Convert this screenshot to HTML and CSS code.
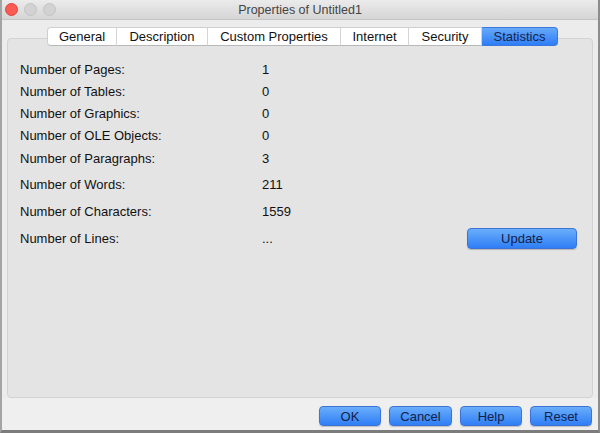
FILE: index.html
```html
<!DOCTYPE html>
<html lang="en">
<head>
    <meta charset="UTF-8">
    <meta name="viewport" content="width=device-width, initial-scale=1.0">
    <title>Properties of Untitled1</title>
    <link rel="stylesheet" href="styles.css">
</head>
<body>
    <div class="window">
        <!-- Title Bar -->
        <div class="titlebar">
            <div class="lights">
                <span class="light close"></span>
                <span class="light"></span>
                <span class="light"></span>
            </div>
            <div class="title">Properties of Untitled1</div>
        </div>

        <!-- Tab Panel -->
        <div class="panel">
            <div class="tabs">
                <div class="tab t-general">General</div>
                <div class="tab t-desc">Description</div>
                <div class="tab t-custom">Custom Properties</div>
                <div class="tab t-internet">Internet</div>
                <div class="tab t-security">Security</div>
                <div class="tab t-stats active">Statistics</div>
            </div>

            <div class="stats">
                <div class="row"><span>Number of Pages:</span><span>1</span></div>
                <div class="row"><span>Number of Tables:</span><span>0</span></div>
                <div class="row"><span>Number of Graphics:</span><span>0</span></div>
                <div class="row"><span>Number of OLE Objects:</span><span>0</span></div>
                <div class="row gap1"><span>Number of Paragraphs:</span><span>3</span></div>
                <div class="row gap4"><span>Number of Words:</span><span>211</span></div>
                <div class="row gap5"><span>Number of Characters:</span><span>1559</span></div>
                <div class="row gap5"><span>Number of Lines:</span><span>...</span><button class="btn update">Update</button></div>
            </div>
        </div>

        <!-- Dialog Buttons -->
        <div class="footer">
            <button class="btn ok">OK</button>
            <button class="btn cancel">Cancel</button>
            <button class="btn help">Help</button>
            <button class="btn reset">Reset</button>
        </div>
    </div>
</body>
</html>
```

FILE: styles.css
```css
body {
    margin: 0;
    font-family: "Liberation Sans", Arial, sans-serif;
    background: #ffffff;
}
.window {
    width: 600px;
    height: 433px;
    box-sizing: border-box;
    border-left: 2px solid #a4a4a4;
    border-right: 2px solid #8c8c8c;
    border-bottom: 3px solid #7c7c7c;
    background: #ececec;
    display: flex;
    flex-direction: column;
}
.titlebar {
    height: 20px;
    box-sizing: border-box;
    border-bottom: 1px solid #c4c4c4;
    background: linear-gradient(#ebebeb, #d5d5d5);
    position: relative;
    display: flex;
    align-items: center;
    justify-content: center;
}
.lights {
    position: absolute;
    left: 3px;
    top: 3px;
    display: flex;
    gap: 6px;
}
.light {
    width: 11px;
    height: 11px;
    border-radius: 50%;
    background: #d2d2d2;
    border: 1px solid #c3c3c3;
}
.light.close {
    background: #fb5b55;
    border-color: #e0443e;
}
.title {
    font-size: 12.5px;
    color: #444;
}
.panel {
    margin: 18px 5px 0 5px;
    height: 360px;
    box-sizing: border-box;
    border: 1px solid #d2d2d2;
    border-radius: 4px;
    background: #e4e4e4;
}
.tabs {
    display: flex;
    margin: -12px 0 0 39px;
    height: 19px;
}
.tab {
    box-sizing: border-box;
    height: 19px;
    line-height: 18px;
    text-align: center;
    font-size: 13px;
    color: #111;
    background: #ffffff;
    border-top: 1px solid #cfcfcf;
    border-bottom: 1px solid #b8b8b8;
    border-right: 1px solid #d4d4d4;
}
.t-general {
    width: 70px;
    border-left: 1px solid #cfcfcf;
    border-radius: 4px 0 0 4px;
}
.t-desc { width: 91px; }
.t-custom { width: 133px; }
.t-internet { width: 68px; }
.t-security { width: 73px; }
.t-stats {
    width: 76px;
    border-radius: 0 4px 4px 0;
}
.tab.active {
    background: linear-gradient(#66a9fa, #2e7df6);
    border-color: #3b78de;
    color: #14264f;
}
.stats {
    margin-top: 12px;
    padding: 0 15px 0 12px;
    font-size: 13px;
    color: #111;
}
.row {
    display: grid;
    grid-template-columns: 242px 1fr auto;
    align-items: center;
    height: 22px;
}
.gap1 { margin-top: 1px; }
.gap4 { margin-top: 4px; }
.gap5 { margin-top: 5px; }
.btn {
    font-family: "Liberation Sans", Arial, sans-serif;
    font-size: 13px;
    color: #12224a;
    height: 20px;
    padding: 0;
    border: 1px solid #3d72d6;
    border-radius: 4px;
    background: linear-gradient(#6aaefb, #2f7ef6);
    box-shadow: 0 1px 1px rgba(0, 0, 0, 0.2);
}
.update {
    width: 110px;
    height: 21px;
}
.footer {
    flex: 1;
    background: #efefef;
    display: flex;
    justify-content: flex-end;
    align-items: flex-start;
    gap: 8px;
    padding: 8px 6px 0 0;
}
.ok { width: 62px; }
.cancel { width: 63px; }
.help { width: 62px; }
.reset { width: 62px; }
```
